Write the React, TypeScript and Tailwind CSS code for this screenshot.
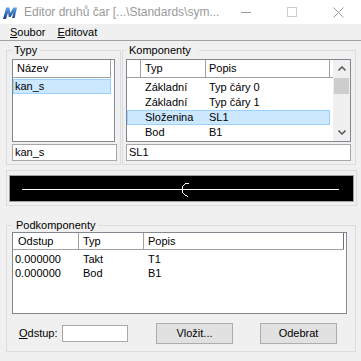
const komponenty = [
  { typ: "Základní", popis: "Typ čáry 0" },
  { typ: "Základní", popis: "Typ čáry 1" },
  { typ: "Složenina", popis: "SL1", selected: true },
  { typ: "Bod", popis: "B1" },
];

const podkomponenty = [
  { odstup: "0.000000", typ: "Takt", popis: "T1" },
  { odstup: "0.000000", typ: "Bod", popis: "B1" },
];

function Chevron({ up }: { up?: boolean }) {
  return (
    <svg width="8" height="5" viewBox="0 0 8 5">
      <polyline
        points={up ? "0.5,4.5 4,1 7.5,4.5" : "0.5,0.5 4,4 7.5,0.5"}
        fill="none"
        stroke="#606060"
        strokeWidth="1.6"
      />
    </svg>
  );
}

function Logo() {
  return (
    <svg width="15" height="12" viewBox="0 0 15 12">
      <defs>
        <linearGradient id="lg" x1="0" y1="0" x2="0" y2="1">
          <stop offset="0" stopColor="#5ea6ea" />
          <stop offset="1" stopColor="#123d8a" />
        </linearGradient>
      </defs>
      <path
        d="M0 12 L3.2 0.5 L6.4 0.5 L7.3 6 L10.4 0.5 L14 0.5 L11.6 11 L9.1 11 L10.4 5.5 L7.6 10 L5.8 10 L5.1 5.6 L3 12 Z"
        fill="url(#lg)"
      />
    </svg>
  );
}

export default function App() {
  return (
    <div className="w-[361px] h-[361px] overflow-hidden bg-[#f0f0f0] font-['Liberation_Sans',Arial,sans-serif] text-[11px] leading-[13px] text-black flex flex-col">
      {/* Title bar */}
      <div className="h-[24px] bg-white flex items-center shrink-0">
        <div className="ml-[3px] mt-[1px]">
          <Logo />
        </div>
        <span className="ml-[6px] text-[12px] text-[#9a9a9a] whitespace-nowrap">
          {"Editor druhů čar [...\\Standards\\sym..."}
        </span>
        <div className="flex-1" />
        <div className="flex h-full">
          <div className="w-[46px] flex items-center justify-center">
            <div className="w-[10px] h-px bg-[#9a9a9a]" />
          </div>
          <div className="w-[46px] flex items-center justify-center">
            <div className="w-[10px] h-[10px] border border-[#cccccc]" />
          </div>
          <div className="w-[46px] flex items-center justify-center">
            <svg width="11" height="11" viewBox="0 0 11 11">
              <path d="M0.5 0.5 L10.5 10.5 M10.5 0.5 L0.5 10.5" stroke="#9a9a9a" strokeWidth="1" />
            </svg>
          </div>
        </div>
      </div>

      {/* Menu */}
      <div className="h-[17px] border-b border-[#a0a0a0] flex items-center pl-[10px] gap-[12px] shrink-0">
        <span>
          <span className="underline">S</span>oubor
        </span>
        <span>
          <span className="underline">E</span>ditovat
        </span>
      </div>

      {/* Top groups */}
      <div className="flex mt-[3px] pl-[6px] gap-px">
        <fieldset className="w-[115px] border border-[#dcdcdc] pl-[5px] pt-[2px] pb-[3px]">
          <legend className="pl-[2px] pr-[3px] leading-[13px]">Typy</legend>
          <div className="w-[103px] h-[83px] border border-[#828790] bg-white">
            <div className="flex h-[18px]">
              <div className="w-[98px] border-r border-b border-[#a0a0a0] pl-[4px] flex items-center">
                Název
              </div>
            </div>
            <div className="mt-px w-[98px] h-[15px] bg-[#cce8ff] border border-[#99d1ff] flex items-center pl-px">
              kan_s
            </div>
          </div>
          <div className="mt-[2px] w-[105px] h-[17px] border border-[#a8a8a8] bg-white flex items-center pl-[2px]">
            kan_s
          </div>
        </fieldset>

        <fieldset className="w-[234px] border border-[#dcdcdc] pl-[3px] pt-[2px] pb-[3px]">
          <legend className="pl-[3px] pr-[8px] leading-[13px]">Komponenty</legend>
          <div className="w-[225px] h-[83px] border border-[#828790] bg-white flex">
            <div className="flex-1">
              <div className="flex h-[18px] border-b border-[#a0a0a0]">
                <div className="w-[14px] border-r border-[#a0a0a0]" />
                <div className="w-[65px] border-r border-[#a0a0a0] pl-[4px] flex items-center">Typ</div>
                <div className="w-[124px] border-r border-[#a0a0a0] pl-[3px] flex items-center">Popis</div>
              </div>
              <div className="mt-[2px]">
                {komponenty.map((k, i) => (
                  <div
                    key={i}
                    className={
                      k.selected
                        ? "w-[203px] h-[15px] flex items-center bg-[#cce8ff] border border-[#99d1ff]"
                        : "w-[203px] h-[15px] flex items-center border border-transparent"
                    }
                  >
                    <div className="w-[13px]" />
                    <div className="w-[65px] pl-[4px]">{k.typ}</div>
                    <div className="pl-[3px]">{k.popis}</div>
                  </div>
                ))}
              </div>
            </div>
            <div className="w-[17px] bg-[#f0f0f0] flex flex-col">
              <div className="h-[17px] flex items-center justify-center">
                <Chevron up />
              </div>
              <div className="flex-1 px-px pt-px">
                <div className="h-[16px] bg-[#cdcdcd]" />
              </div>
              <div className="h-[17px] flex items-center justify-center">
                <Chevron />
              </div>
            </div>
          </div>
          <div className="mt-[2px] w-[225px] h-[17px] border border-[#a8a8a8] bg-white flex items-center pl-[2px]">
            SL1
          </div>
        </fieldset>
      </div>

      {/* Preview */}
      <fieldset className="mx-[6px] mt-[5px] w-[350px] border border-[#dcdcdc] px-[2px] pt-[4px] pb-[3px]">
        <div className="h-[27px] border border-[#a0a0a0] bg-black">
          <svg width="343" height="25" viewBox="0 0 343 25" shapeRendering="crispEdges">
            <line x1="12" y1="13.5" x2="329" y2="13.5" stroke="#ffffff" strokeWidth="1" />
            <polyline
              points="178.5,7.5 175.5,7.5 172.5,10.5 172.5,16.5 175.5,19.5 178.5,20.5"
              fill="none"
              stroke="#ffffff"
              strokeWidth="1"
            />
          </svg>
        </div>
      </fieldset>

      {/* Podkomponenty */}
      <fieldset className="mx-[6px] mt-[13px] w-[350px] border border-[#dcdcdc] pl-[5px] pb-[8px]">
        <legend className="pl-[4px] pr-[2px] leading-[13px]">Podkomponenty</legend>
        <div className="w-[335px] h-[82px] border border-[#828790] bg-white">
          <div className="flex h-[17px]">
            <div className="flex border-b border-[#a0a0a0]">
              <div className="w-[66px] border-r border-[#a0a0a0] pl-[5px] flex items-center">Odstup</div>
              <div className="w-[65px] border-r border-[#a0a0a0] pl-[4px] flex items-center">Typ</div>
              <div className="w-[200px] border-r border-[#707070] pl-[4px] flex items-center">Popis</div>
            </div>
          </div>
          <div className="mt-[2px]">
            {podkomponenty.map((p, i) => (
              <div key={i} className="h-[14px] flex items-center">
                <div className="w-[66px] pl-[2px]">{p.odstup}</div>
                <div className="w-[65px] pl-[4px]">{p.typ}</div>
                <div className="pl-[4px]">{p.popis}</div>
              </div>
            ))}
          </div>
        </div>
        <div className="mt-[9px] h-[20px] flex items-center">
          <span className="ml-[7px] w-[43px]">
            <span className="underline">O</span>dstup:
          </span>
          <div className="w-[66px] h-[17px] border border-[#a8a8a8] bg-white" />
          <button className="ml-[28px] w-[77px] h-[21px] bg-[#e1e1e1] border border-[#adadad] flex items-center justify-center">
            Vložit...
          </button>
          <button className="ml-[27px] w-[77px] h-[21px] bg-[#e1e1e1] border border-[#adadad] flex items-center justify-center">
            Odebrat
          </button>
        </div>
      </fieldset>
    </div>
  );
}
